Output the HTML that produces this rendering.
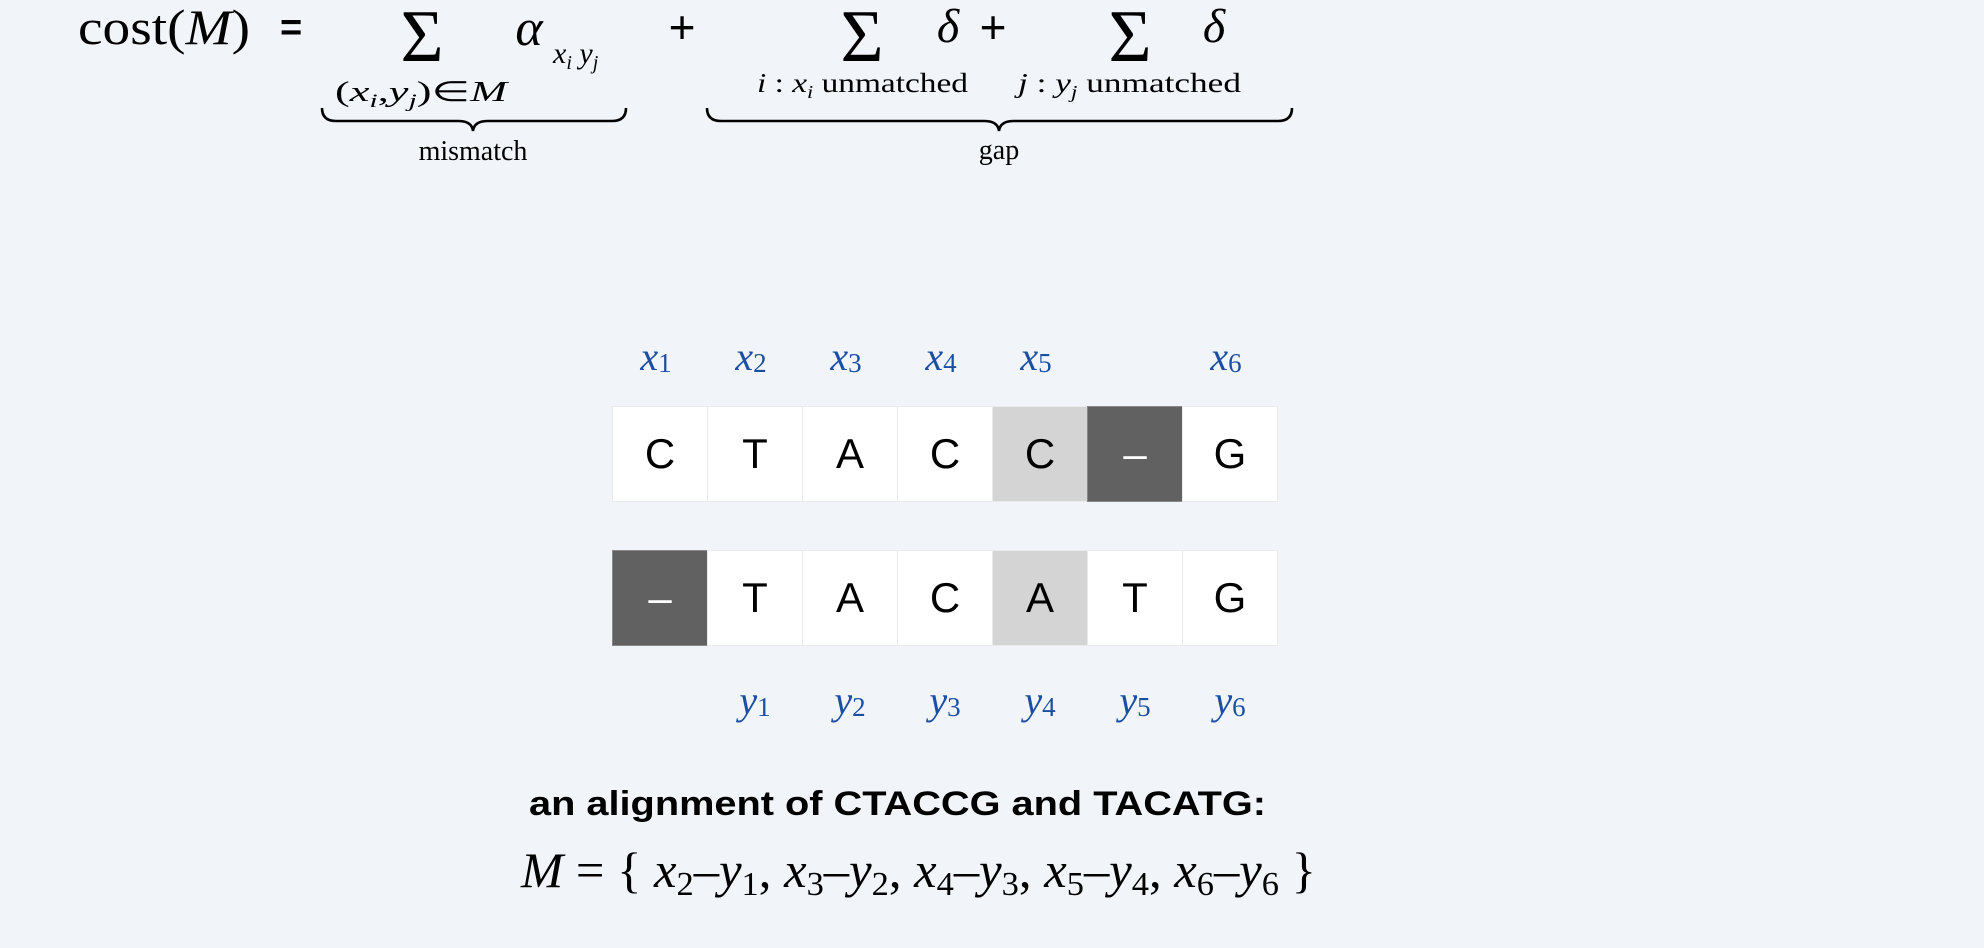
<!DOCTYPE html>
<html><head><meta charset="utf-8"><style>
html,body{margin:0;padding:0;background:#f1f5f9;}
svg{display:block}
.s{font-family:"Liberation Serif",serif}
.a{font-family:"Liberation Sans",sans-serif}
</style></head><body>
<svg width="1984" height="948" viewBox="0 0 1984 948" xmlns="http://www.w3.org/2000/svg">
<rect width="1984" height="948" fill="#f1f5f9"/>
<text class="s" x="78" y="44" font-size="50" textLength="172" lengthAdjust="spacingAndGlyphs">cost(<tspan font-style="italic">M</tspan>)</text>
<text class="a" x="280" y="40" font-size="38" font-weight="bold">=</text>
<text class="s" x="422" y="61" font-size="74" text-anchor="middle">Σ</text>
<text class="s" x="529" y="45" font-size="52" font-style="italic" text-anchor="middle">α</text>
<text class="s" x="553" y="63" font-size="30" font-style="italic">x<tspan font-size="20" dy="6">i</tspan><tspan dy="-6"> y</tspan><tspan font-size="20" dy="6">j</tspan></text>
<text class="s" x="335" y="101" font-size="28" textLength="172" lengthAdjust="spacingAndGlyphs">(<tspan font-style="italic">x</tspan><tspan font-style="italic" font-size="19" dy="6">i</tspan><tspan dy="-6">,</tspan><tspan font-style="italic">y</tspan><tspan font-style="italic" font-size="19" dy="6">j</tspan><tspan dy="-6">)∈</tspan><tspan font-style="italic">M</tspan></text>
<text class="a" x="682" y="43" font-size="46" text-anchor="middle">+</text>
<text class="s" x="862" y="61" font-size="74" text-anchor="middle">Σ</text>
<text class="s" x="948" y="42" font-size="48" font-style="italic" text-anchor="middle">δ</text>
<text class="a" x="993" y="43" font-size="46" text-anchor="middle">+</text>
<text class="s" x="1130" y="61" font-size="74" text-anchor="middle">Σ</text>
<text class="s" x="1214" y="42" font-size="48" font-style="italic" text-anchor="middle">δ</text>
<text class="s" x="757" y="92" font-size="27" textLength="211" lengthAdjust="spacingAndGlyphs"><tspan font-style="italic">i</tspan> : <tspan font-style="italic">x</tspan><tspan font-style="italic" font-size="18" dy="6">i</tspan><tspan dy="-6"> unmatched</tspan></text>
<text class="s" x="1018" y="92" font-size="27" textLength="223" lengthAdjust="spacingAndGlyphs"><tspan font-style="italic">j</tspan> : <tspan font-style="italic">y</tspan><tspan font-style="italic" font-size="18" dy="6">j</tspan><tspan dy="-6"> unmatched</tspan></text>
<path d="M322 108 Q322 121 336 121 L458 121 Q472 121 473 131 Q474 121 488 121 L612 121 Q626 121 626 108" fill="none" stroke="#000" stroke-width="2.6"/>
<path d="M707 108 Q707 121 721 121 L984 121 Q998 121 999 131 Q1000 121 1014 121 L1278 121 Q1292 121 1292 108" fill="none" stroke="#000" stroke-width="2.6"/>
<text class="s" x="473" y="160" font-size="28" text-anchor="middle">mismatch</text>
<text class="s" x="999" y="159" font-size="28" text-anchor="middle">gap</text>
<g fill="#fff" stroke="#e8eaec" stroke-width="1">
<rect x="612.5" y="406.5" width="95" height="95"/><rect x="707.5" y="406.5" width="95" height="95"/><rect x="802.5" y="406.5" width="95" height="95"/><rect x="897.5" y="406.5" width="95" height="95"/><rect x="992.5" y="406.5" width="95" height="95" fill="#d4d4d4"/><rect x="1087.5" y="406.5" width="95" height="95" fill="#616161" stroke="#888"/><rect x="1182.5" y="406.5" width="95" height="95"/>
<rect x="612.5" y="550.5" width="95" height="95" fill="#616161" stroke="#888"/><rect x="707.5" y="550.5" width="95" height="95"/><rect x="802.5" y="550.5" width="95" height="95"/><rect x="897.5" y="550.5" width="95" height="95"/><rect x="992.5" y="550.5" width="95" height="95" fill="#d4d4d4"/><rect x="1087.5" y="550.5" width="95" height="95"/><rect x="1182.5" y="550.5" width="95" height="95"/>
</g>
<g class="a" font-size="42" text-anchor="middle" fill="#000">
<text x="660" y="468">C</text><text x="755" y="468">T</text><text x="850" y="468">A</text><text x="945" y="468">C</text><text x="1040" y="468">C</text><text x="1135" y="468" fill="#fff">–</text><text x="1230" y="468">G</text>
<text x="660" y="612" fill="#fff">–</text><text x="755" y="612">T</text><text x="850" y="612">A</text><text x="945" y="612">C</text><text x="1040" y="612">A</text><text x="1135" y="612">T</text><text x="1230" y="612">G</text>
</g>
<g class="s" font-size="40" fill="#1a4fa3" text-anchor="middle">
<text x="656" y="370"><tspan font-style="italic">x</tspan><tspan font-size="27" dy="2">1</tspan></text>
<text x="751" y="370"><tspan font-style="italic">x</tspan><tspan font-size="27" dy="2">2</tspan></text>
<text x="846" y="370"><tspan font-style="italic">x</tspan><tspan font-size="27" dy="2">3</tspan></text>
<text x="941" y="370"><tspan font-style="italic">x</tspan><tspan font-size="27" dy="2">4</tspan></text>
<text x="1036" y="370"><tspan font-style="italic">x</tspan><tspan font-size="27" dy="2">5</tspan></text>
<text x="1226" y="370"><tspan font-style="italic">x</tspan><tspan font-size="27" dy="2">6</tspan></text>
<text x="755" y="714"><tspan font-style="italic">y</tspan><tspan font-size="27" dy="2">1</tspan></text>
<text x="850" y="714"><tspan font-style="italic">y</tspan><tspan font-size="27" dy="2">2</tspan></text>
<text x="945" y="714"><tspan font-style="italic">y</tspan><tspan font-size="27" dy="2">3</tspan></text>
<text x="1040" y="714"><tspan font-style="italic">y</tspan><tspan font-size="27" dy="2">4</tspan></text>
<text x="1135" y="714"><tspan font-style="italic">y</tspan><tspan font-size="27" dy="2">5</tspan></text>
<text x="1230" y="714"><tspan font-style="italic">y</tspan><tspan font-size="27" dy="2">6</tspan></text>
</g>
<text class="a" x="529" y="815" font-size="34" font-weight="bold" textLength="737" lengthAdjust="spacingAndGlyphs">an alignment of CTACCG and TACATG:</text>
<text class="s" x="521" y="887" font-size="50" textLength="795" lengthAdjust="spacingAndGlyphs"><tspan font-style="italic">M</tspan> = { <tspan font-style="italic">x</tspan><tspan font-size="34" dy="8">2</tspan><tspan dy="-8">–</tspan><tspan font-style="italic">y</tspan><tspan font-size="34" dy="8">1</tspan><tspan dy="-8">, </tspan><tspan font-style="italic">x</tspan><tspan font-size="34" dy="8">3</tspan><tspan dy="-8">–</tspan><tspan font-style="italic">y</tspan><tspan font-size="34" dy="8">2</tspan><tspan dy="-8">, </tspan><tspan font-style="italic">x</tspan><tspan font-size="34" dy="8">4</tspan><tspan dy="-8">–</tspan><tspan font-style="italic">y</tspan><tspan font-size="34" dy="8">3</tspan><tspan dy="-8">, </tspan><tspan font-style="italic">x</tspan><tspan font-size="34" dy="8">5</tspan><tspan dy="-8">–</tspan><tspan font-style="italic">y</tspan><tspan font-size="34" dy="8">4</tspan><tspan dy="-8">, </tspan><tspan font-style="italic">x</tspan><tspan font-size="34" dy="8">6</tspan><tspan dy="-8">–</tspan><tspan font-style="italic">y</tspan><tspan font-size="34" dy="8">6</tspan><tspan dy="-8"> }</tspan></text>
</svg>
</body></html>
